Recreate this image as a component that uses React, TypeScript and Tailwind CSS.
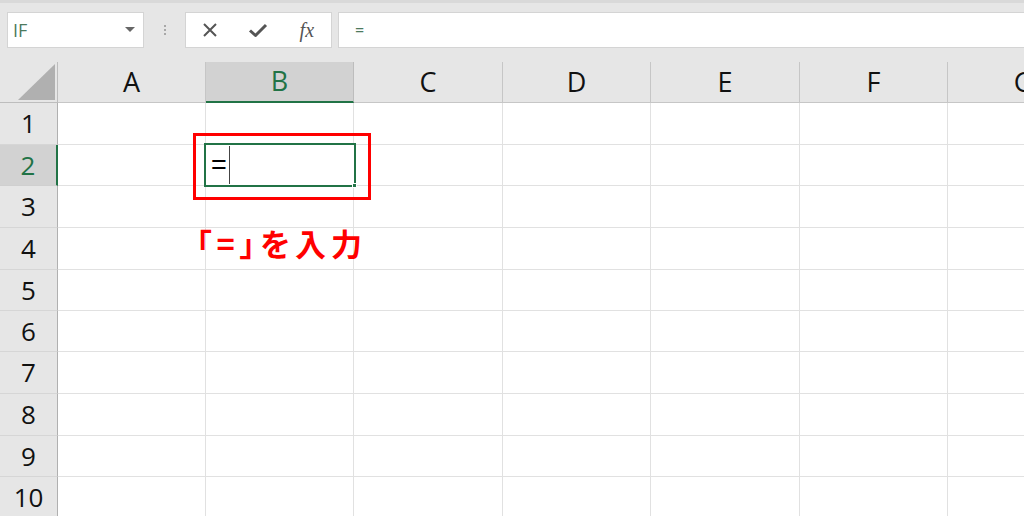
import React from 'react';

const COLS = ['A', 'B', 'C', 'D', 'E', 'F', 'G'];
const ROW_HEIGHTS = [42, 41, 42, 42, 41, 41, 42, 42, 41, 41];

function Toolbar() {
  return (
    <div className="flex h-[62px] items-start border-t-[3px] border-[#d9d9d9] bg-[#e6e6e6] pl-[7px] pt-[9px]">
      <div className="flex h-[36px] w-[137px] items-center justify-between border border-[#d4d4d4] bg-white pl-[5px] pr-[8px]">
        <span className="text-[18px] text-[#4d7a5d]">IF</span>
        <svg width="10" height="6" viewBox="0 0 10 6">
          <path d="M0 0h10L5 5z" fill="#666" />
        </svg>
      </div>
      <div className="flex h-[36px] w-[41px] flex-col items-center justify-center gap-[2px]">
        <span className="h-[2px] w-[2px] bg-[#a8a8a8]" />
        <span className="h-[2px] w-[2px] bg-[#a8a8a8]" />
        <span className="h-[2px] w-[2px] bg-[#a8a8a8]" />
      </div>
      <div className="flex h-[36px] w-[147px] items-center border border-[#d4d4d4] bg-white">
        <div className="flex w-[49px] justify-center">
          <svg width="16" height="16" viewBox="0 0 16 16">
            <path d="M2 2l12 12M14 2L2 14" stroke="#555" strokeWidth="2" fill="none" />
          </svg>
        </div>
        <div className="flex w-[49px] justify-center">
          <svg width="20" height="16" viewBox="0 0 20 16">
            <path d="M2 8.5l5.5 5L18 3" stroke="#555" strokeWidth="3" fill="none" strokeLinejoin="round" />
          </svg>
        </div>
        <div className="flex w-[49px] justify-center">
          <span className="font-['Liberation_Serif',serif] text-[20px] italic leading-none text-[#555]">fx</span>
        </div>
      </div>
      <div className="ml-[6px] flex h-[36px] flex-1 items-center border border-r-0 border-[#d4d4d4] bg-white pl-[16px]">
        <span className="text-[16px] text-[#4d7a5d]">=</span>
      </div>
    </div>
  );
}

function Sheet() {
  return (
    <div className="grid w-[1100px] grid-cols-[58px_148px_148px_149px_148px_149px_148px_1fr]">
      <div className="flex h-[41px] items-end justify-end border-r border-b border-[#bdbdbd] bg-[#e6e6e6] pb-[2px] pr-[2px]">
        <svg width="37" height="36" viewBox="0 0 37 36">
          <path d="M37 0V36H0z" fill="#b0b0b0" />
        </svg>
      </div>
      {COLS.map((c) => (
        <div
          key={c}
          className={
            c === 'B'
              ? 'flex h-[41px] items-center justify-center border-r border-b-2 border-r-[#bdbdbd] border-b-[#217346] bg-[#d2d2d2] text-[#217346]'
              : 'flex h-[41px] items-center justify-center border-r border-b border-[#c6c6c6] bg-[#e6e6e6] text-[#111]'
          }
        >
          <span className="text-[27px]">{c}</span>
        </div>
      ))}
      {ROW_HEIGHTS.map((h, i) => (
        <React.Fragment key={i}>
          <div
            style={{ height: h }}
            className={
              i === 1
                ? 'flex items-center justify-center border-r-2 border-b border-r-[#217346] border-b-[#cfcfcf] bg-[#d2d2d2] text-[#217346]'
                : 'flex items-center justify-center border-r border-b border-r-[#b0b0b0] border-b-[#d6d6d6] bg-[#e6e6e6] text-[#111]'
            }
          >
            <span className="text-[26px]">{i + 1}</span>
          </div>
          {COLS.map((c) => (
            <div key={c} style={{ height: h }} className="border-r border-b border-[#e1e1e1] bg-white" />
          ))}
        </React.Fragment>
      ))}
    </div>
  );
}

export default function App() {
  return (
    <div className="relative h-[516px] w-[1024px] overflow-hidden bg-white font-['Open_Sans','Noto_Sans',sans-serif]">
      <Toolbar />
      <Sheet />

      {/* active cell B2 */}
      <div className="absolute left-[204px] top-[143px] h-[44px] w-[152px] border-2 border-[#217346] bg-white">
        <div className="flex h-full items-center pl-[5px]">
          <span className="font-['Liberation_Sans',sans-serif] text-[27px] leading-none text-black">=</span>
          <span className="ml-[2px] h-[38px] w-px bg-[#444]" />
        </div>
        <span className="absolute -bottom-[3px] -right-[3px] h-[5px] w-[5px] border border-white bg-[#217346]" />
      </div>

      {/* annotation */}
      <div className="absolute left-[193px] top-[133px] h-[67px] w-[178px] border-[3px] border-[#ff0000]" />
      <div className="absolute left-[196px] top-[227px] font-['Noto_Sans_CJK_JP',sans-serif] text-[31px] font-bold leading-none tracking-[5px] text-[#ff0000] [font-feature-settings:'palt']">
        「=」を入力
      </div>
    </div>
  );
}
